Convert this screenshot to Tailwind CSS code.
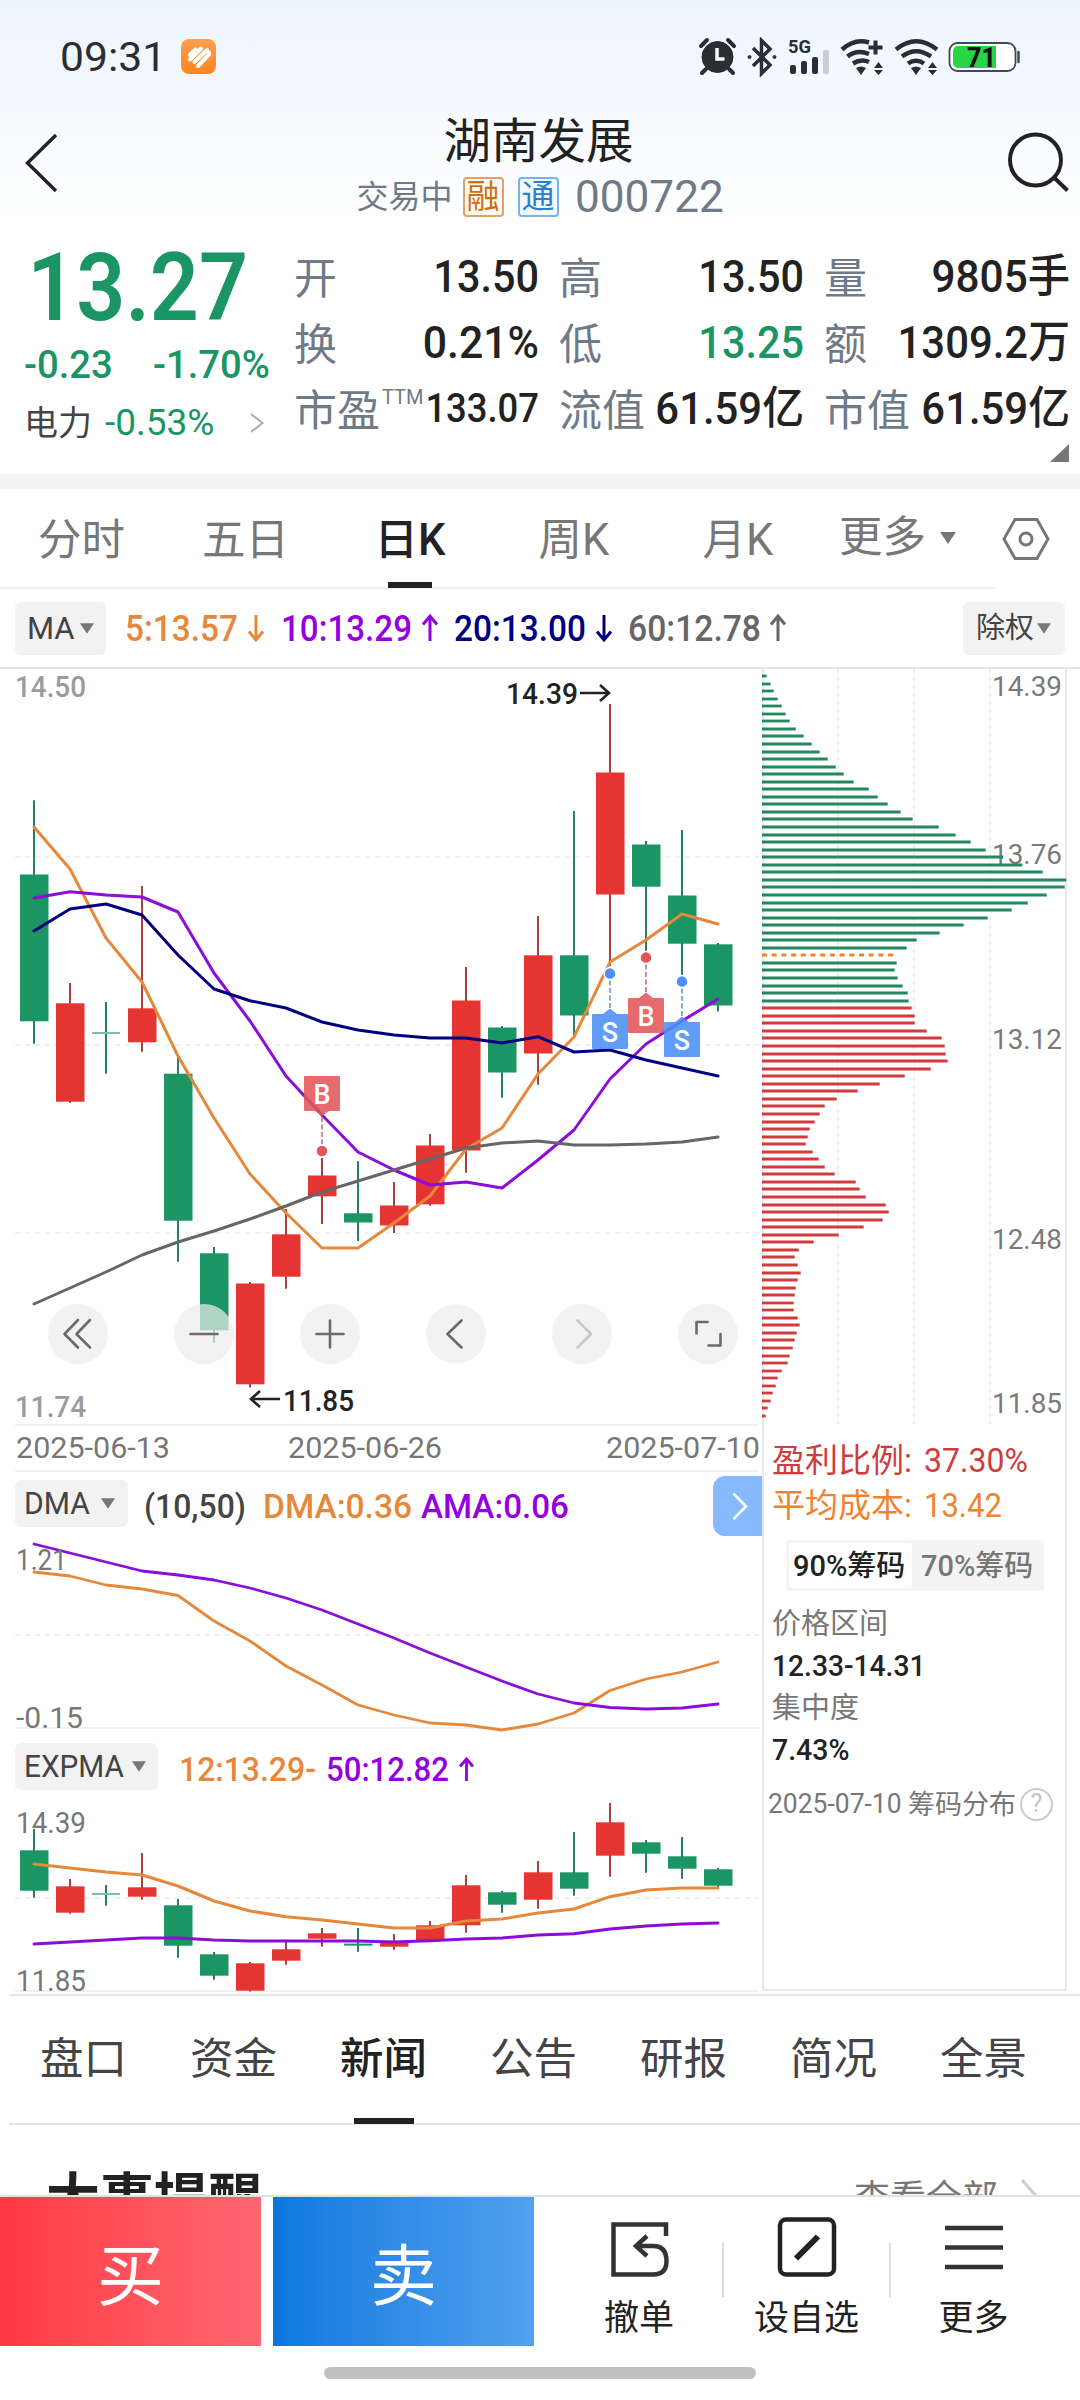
<!DOCTYPE html>
<html lang="zh-CN">
<head>
<meta charset="utf-8">
<title>湖南发展 000722</title>
<script src="https://cdn.jsdelivr.net/npm/@tailwindcss/browser@4"></script>
</head>
<body class="bg-white">
<div class="relative flex h-[2400px] w-[1080px] flex-col overflow-hidden bg-white font-['Roboto','Noto_Sans_CJK_SC',sans-serif] text-[#222] whitespace-nowrap">

  <!-- status bar + title -->
  <header class="h-[240px] shrink-0 bg-linear-to-b from-[#edf5fe] via-[#f7faff] to-white">
    <div class="flex h-[114px] items-center pl-[60px]">
      <span class="w-[121px] origin-left scale-x-[1.04] text-[41px] leading-[48px] text-[#2b2d30]">09:31</span>
      <svg class="h-9 w-9" viewBox="0 0 36 36"><defs><linearGradient id="og" x1="0" y1="0" x2="0" y2="1"><stop offset="0" stop-color="#ffa04c"/><stop offset="1" stop-color="#ff8420"/></linearGradient></defs><rect width="35" height="35" rx="8" fill="url(#og)"/><g fill="none" stroke="#fff" stroke-width="4" stroke-linecap="round" stroke-linejoin="round"><path d="M9 16L14.500 10.500M9 20.500L20 9.500M13.500 23L26 11M17 27L28 15.500V13.500"/></g></svg>
      <svg class="ml-[481px] h-[40px] w-[324px]" viewBox="698 37 324 40">
        <g fill="#2b2d30" stroke="#2b2d30">
          <circle cx="717.500" cy="57" r="15.500"/><path fill="none" stroke-width="4" stroke-linecap="round" d="M701 46l6-6M734 46l-6-6M706 69l-4 4M729 69l4 4"/>
          <path d="M717 48v11h7.500" fill="none" stroke="#f4f8ff" stroke-width="3.500"/>
          <path fill="none" stroke-width="3.500" d="M753 48l17 17-8.500 8.500V40.500l8.500 8.500-17 17"/><circle cx="749.500" cy="57" r="1.500"/><circle cx="774.500" cy="57" r="1.500"/>
        </g>
        <text x="788" y="53" font-size="18.500" font-weight="700" textLength="23" lengthAdjust="spacingAndGlyphs" fill="#2b2d30">5G</text>
        <g fill="#2b2d30"><rect x="790" y="65" width="6" height="9" rx="2"/><rect x="801" y="61" width="6" height="13" rx="2"/><rect x="812" y="57" width="6" height="17" rx="2"/><rect x="823" y="50" width="6" height="24" rx="2" fill="#c9ccd0"/></g>
        <g fill="none" stroke="#2b2d30" stroke-width="4.500">
          <path d="M842 49.500Q855 38 869 42.500M847.500 56.500Q857 49 869 54M853 63.500Q861 58.500 869 62"/>
          <path d="M868.500 47.500h14M875.500 40.500v14" stroke-width="4"/>
          <path d="M896 49.500Q916 33 937 49.500M902 56.500Q916 46 931 56.500M908 63.500Q916 58 924 63.500"/>
        </g>
        <g fill="#2b2d30"><path d="M856 68q5-3 10 0l-5 7zM911 68q5-3 10 0l-5 7zM874 68l4.500-6 4.500 6zM874 70l4.500 5 4.500-5zM928 68l4.500-6 4.500 6zM928 70l4.500 5 4.500-5z"/></g>
        <rect x="949.500" y="43" width="66" height="28" rx="8" fill="#fff" stroke="#45484c" stroke-width="1.800"/><path d="M1018.500 52v10" stroke="#45484c" stroke-width="2.500" stroke-linecap="round"/>
        <path d="M958 46h38v22h-38a5 5 0 0 1-5-5V51a5 5 0 0 1 5-5z" fill="#28d645"/>
        <text x="967" y="66.500" font-size="27" font-weight="800" textLength="29" lengthAdjust="spacingAndGlyphs" fill="#111">71</text>
      </svg>
    </div>
    <div class="flex h-[120px]">
      <svg class="ml-[20px] mt-[16px] h-[66px] w-[60px]" viewBox="20 130 60 66"><path d="M56 135L27.500 163L56 191" fill="none" stroke="#222" stroke-width="3.400"/></svg>
      <div class="flex flex-1 flex-col items-center">
        <h1 class="-ml-[3px] text-[47.5px] leading-[56px]">湖南发展</h1>
        <div class="-ml-[2px] mt-[2px] flex h-[50px] items-center text-[32px] leading-[50px] text-[#6f7a87]">
          <span class="w-[106px]">交易中</span>
          <span class="mr-[14px] flex h-[40px] w-[41px] items-center justify-center rounded-[4px] border-2 border-[#e0a068] bg-[#fffaf2] text-[33px] leading-[36px] text-[#cc6f16]">融</span>
          <span class="flex h-[40px] w-[41px] items-center justify-center rounded-[4px] border-2 border-[#7cb1e6] bg-[#f0f9ff] text-[33px] leading-[36px] text-[#2d7fcc]">通</span>
          <span class="ml-[16px] w-[147px] origin-left scale-x-[.98] text-[45px]">000722</span>
        </div>
      </div>
      <svg class="mt-[14px] mr-[8px] h-[70px] w-[72px]" viewBox="1000 128 72 70"><circle cx="1035.500" cy="160" r="25.500" fill="none" stroke="#222" stroke-width="4"/><path d="M1054 177.500L1067.500 190.500" stroke="#222" stroke-width="4"/></svg>
    </div>
  </header>

  <!-- quote summary -->
  <section class="flex h-[234px] shrink-0">
    <div class="w-[295px] text-[#1a9563]">
      <div class="mt-[2px] h-[92px] origin-left scale-x-[.905] pl-[30px] text-[95px] leading-[92px] font-semibold">13.27</div>
      <div class="mt-[9px] flex h-[44px] text-[39px] leading-[44px] font-medium">
        <span class="ml-[24px] w-[129px] origin-left scale-x-[.98]">-0.23</span><span class="origin-left scale-x-[.98]">-1.70%</span>
      </div>
      <div class="mt-[14px] flex h-[44px] items-center text-[37px] leading-[44px]">
        <span class="ml-[24px] w-[81px] text-[34px] text-[#444]">电力</span><span class="w-[142px]">-0.53%</span>
        <svg class="h-6 w-5" viewBox="0 0 20 24"><path d="M4 3L15.500 12L4 21" fill="none" stroke="#a8adb3" stroke-width="2"/></svg>
      </div>
    </div>
    <div class="relative -ml-[1px] grid h-[202px] w-[776px] grid-cols-[245px_245px_246px] grid-rows-3 gap-x-[20px] pt-[4px] text-[45px] leading-[66px] font-medium">
      <div class="flex"><span class="pt-[2px] text-[43px] font-normal text-[#6f7a87]">开</span><b class="flex w-0 flex-1 origin-right scale-x-[.92] justify-end font-medium">13.50</b></div>
      <div class="flex"><span class="pt-[2px] text-[43px] font-normal text-[#6f7a87]">高</span><b class="flex w-0 flex-1 origin-right scale-x-[.92] justify-end font-medium">13.50</b></div>
      <div class="flex"><span class="pt-[2px] text-[43px] font-normal text-[#6f7a87]">量</span><b class="flex w-0 flex-1 origin-right scale-x-[.94] justify-end font-medium">9805手</b></div>
      <div class="flex"><span class="pt-[2px] text-[43px] font-normal text-[#6f7a87]">换</span><b class="flex w-0 flex-1 origin-right scale-x-[.95] justify-end font-medium">0.21%</b></div>
      <div class="flex"><span class="pt-[2px] text-[43px] font-normal text-[#6f7a87]">低</span><b class="flex w-0 flex-1 origin-right scale-x-[.92] justify-end font-medium text-[#1a9563]">13.25</b></div>
      <div class="flex"><span class="pt-[2px] text-[43px] font-normal text-[#6f7a87]">额</span><b class="flex w-0 flex-1 origin-right scale-x-[.93] justify-end font-medium">1309.2万</b></div>
      <div class="flex"><span class="pt-[2px] text-[43px] font-normal text-[#6f7a87]">市盈</span><span class="w-0 origin-left pt-[2px] pl-[2px] text-[20px] leading-[38px] font-normal text-[#6f7a87]">TTM</span><b class="flex w-0 flex-1 origin-right scale-x-[.91] justify-end text-[40px] font-medium">133.07</b></div>
      <div class="flex"><span class="pt-[2px] text-[43px] font-normal text-[#6f7a87]">流值</span><b class="flex w-0 flex-1 origin-right scale-x-[.93] justify-end font-medium">61.59亿</b></div>
      <div class="flex"><span class="pt-[2px] text-[43px] font-normal text-[#6f7a87]">市值</span><b class="flex w-0 flex-1 origin-right scale-x-[.93] justify-end font-medium">61.59亿</b></div>
      <svg class="absolute top-[204px] right-[1px] h-[18px] w-[19px]" viewBox="0 0 19 18"><path d="M19 0V18H0z" fill="#777"/></svg>
    </div>
  </section>
  <div class="h-[15px] shrink-0 bg-[#f4f4f4]"></div>

  <!-- period tabs -->
  <nav class="flex h-[100px] shrink-0 text-[43.5px] leading-[104px] text-[#777]">
    <div class="flex h-[100px] w-[996px] border-b-2 border-[#f0f0f0]">
      <span class="w-[164px] pl-[38px]">分时</span>
      <span class="w-[164px] pl-[38px]">五日</span>
      <span class="relative w-[164px] text-center font-medium text-[#222]">日K<i class="absolute bottom-[-1px] left-[60px] h-[6px] w-[44px] bg-[#222]"></i></span>
      <span class="w-[164px] text-center">周K</span>
      <span class="w-[164px] text-center">月K</span>
      <span class="flex items-center pl-[19px]">更多<svg class="ml-[14px] h-3 w-4" viewBox="0 0 16 12"><path d="M0 0H16L8 12z" fill="#777"/></svg></span>
    </div>
    <svg class="mt-[25px] h-[50px] w-[60px]" viewBox="996 514 60 50"><g fill="none" stroke="#777" stroke-width="3"><path d="M1015 519.500H1037L1048 539L1037 558.500H1015L1004 539z"/><circle cx="1026" cy="539" r="6"/></g></svg>
  </nav>

  <!-- moving-average legend -->
  <div class="flex h-[80px] shrink-0 items-center border-b-2 border-[#e6e6e6] pl-[15px] text-[36px] leading-[53px] font-medium">
    <span class="flex h-[53px] w-[91px] items-center rounded-[6px] bg-[#f2f2f2] pl-[12px] text-[32px] leading-[55px] font-normal text-[#444]"><span class="w-[53px] origin-left scale-x-[.97]">MA</span><svg class="h-[11px] w-[14px]" viewBox="0 0 16 12"><path d="M0 0H16L8 12z" fill="#777"/></svg></span>
    <svg class="h-[53px] w-[700px]" viewBox="106 602 700 53" font-size="36" font-weight="500">
      <g fill="#e6883c" stroke="none"><text x="125" y="640.500" textLength="113" lengthAdjust="spacingAndGlyphs">5:13.57</text></g>
      <g fill="#9400e0"><text x="281" y="640.500" textLength="131" lengthAdjust="spacingAndGlyphs">10:13.29</text></g>
      <g fill="#000080"><text x="454" y="640.500" textLength="132" lengthAdjust="spacingAndGlyphs">20:13.00</text></g>
      <g fill="#666"><text x="628" y="640.500" textLength="133" lengthAdjust="spacingAndGlyphs">60:12.78</text></g>
      <g fill="none" stroke-width="3">
        <path stroke="#e6883c" d="M256 615V640M249 631.500L256 640L263 631.500"/>
        <path stroke="#9400e0" d="M430 641V616M423 624.500L430 616L437 624.500"/>
        <path stroke="#000080" d="M604 615V640M597 631.500L604 640L611 631.500"/>
        <path stroke="#666" d="M778 641V616M771 624.500L778 616L785 624.500"/>
      </g>
    </svg>
    <span class="ml-auto mr-[15px] flex h-[53px] w-[102px] items-center rounded-[6px] bg-[#f2f2f2] pl-[13px] text-[29px] leading-[57px] font-normal text-[#444]">除权<svg class="ml-[3px] h-[11px] w-[14px]" viewBox="0 0 16 12"><path d="M0 0H16L8 12z" fill="#777"/></svg></span>
  </div>

  <!-- charts -->
  <section class="flex h-[1325px] shrink-0">
    <div class="w-[762px]">
      <svg id="main" class="block h-[803px] w-[762px]" viewBox="0 669 762 803"></svg>
      <div class="flex h-[66px]">
        <div class="flex flex-1 pt-[8px] pl-[15px]">
          <span class="flex h-[47px] w-[113px] items-center rounded-[6px] bg-[#f2f2f2] pl-[9px] text-[31px] leading-[49px] font-normal text-[#444]"><span class="w-[77px] origin-left scale-x-[.97]">DMA</span><svg class="h-[11px] w-[14px]" viewBox="0 0 16 12"><path d="M0 0H16L8 12z" fill="#777"/></svg></span>
          <svg class="h-[56px] w-[480px]" viewBox="128 1480 480 56" font-size="33" font-weight="500">
            <text x="144" y="1518" textLength="102" lengthAdjust="spacingAndGlyphs" fill="#444">(10,50)</text>
            <text x="263" y="1518" textLength="149" lengthAdjust="spacingAndGlyphs" fill="#e6883c">DMA:0.36</text>
            <text x="421" y="1518" textLength="148" lengthAdjust="spacingAndGlyphs" fill="#9400e0">AMA:0.06</text>
          </svg>
        </div>
        <div class="mt-[4px] h-[60px] w-[49px] rounded-l-[12px] bg-[#87b9ff]"><svg class="h-[60px] w-[49px]" viewBox="0 0 49 60"><path d="M20.500 17.500L33 30.500L20.500 43" fill="none" stroke="#fff" stroke-width="2.600"/></svg></div>
      </div>
      <svg id="dma" class="block h-[205px] w-[762px]" viewBox="0 1538 762 205"></svg>
      <div class="flex h-[56px] pl-[15px]">
        <span class="flex h-[47px] w-[143px] items-center rounded-[6px] bg-[#f2f2f2] pl-[9px] text-[31px] leading-[49px] font-normal text-[#444]"><span class="w-[108px] origin-left scale-x-[.96]">EXPMA</span><svg class="h-[11px] w-[14px]" viewBox="0 0 16 12"><path d="M0 0H16L8 12z" fill="#777"/></svg></span>
        <svg class="h-[56px] w-[340px]" viewBox="158 1743 340 56" font-size="33" font-weight="500">
          <text x="179" y="1781" textLength="137" lengthAdjust="spacingAndGlyphs" fill="#e6883c">12:13.29-</text>
          <text x="326" y="1781" textLength="123" lengthAdjust="spacingAndGlyphs" fill="#9400e0">50:12.82</text>
          <path d="M466.500 1781V1759M460 1766.500L466.500 1759L473 1766.500" fill="none" stroke="#9400e0" stroke-width="2.800"/>
        </svg>
      </div>
      <svg id="expma" class="block h-[195px] w-[762px]" viewBox="0 1799 762 195"></svg>
    </div>
    <aside class="h-[1322px] w-[305px] border-r-2 border-b-2 border-l-2 border-[#e8e8e8]">
      <svg id="chips" class="-ml-[2px] block h-[756px] w-[305px]" viewBox="762 669 305 756"></svg>
      <div class="pt-[13px] pl-[8px] text-[33px] leading-[45px]">
        <div class="flex text-[#cf3c3c]"><span class="w-[152px]">盈利比例:</span><span class="origin-left scale-x-[.97]">37.30%</span></div>
        <div class="flex text-[#ee8430]"><span class="w-[152px]">平均成本:</span><span class="origin-left scale-x-[.94]">13.42</span></div>
      </div>
      <div class="mt-[12px] ml-[22px] flex h-[51px] w-[258px] rounded-[4px] bg-[#f4f4f4] p-[3px] text-[29px] leading-[47px] font-medium">
        <span class="w-[123px] rounded-[3px] bg-white pl-[4px]"><span class="inline-block origin-left">90%筹码</span></span><span class="pl-[9px] text-[#777]"><span class="inline-block origin-left">70%筹码</span></span>
      </div>
      <div class="mt-[12px] pl-[8px] text-[29px] leading-[42px] text-[#777]">
        <div>价格区间</div>
        <div class="origin-left scale-x-[.94] text-[30px] font-medium text-[#222]">12.33-14.31</div>
        <div>集中度</div>
        <div class="origin-left scale-x-[.95] text-[30px] font-medium text-[#222]">7.43%</div>
      </div>
      <div class="mt-[12px] flex h-[42px] items-center pl-[4px] text-[27px] leading-[42px] text-[#777]">
        <span class="w-[140px] origin-left scale-x-[.98]">2025-07-10</span><span class="w-[112px] pt-[2px] text-[27px]">筹码分布</span>
        <span class="flex h-[33px] w-[33px] shrink-0 items-center justify-center rounded-full border-2 border-[#ccc] text-[25px] text-[#c4c4c4]">?</span>
      </div>
    </aside>
  </section>

  <!-- info tabs -->
  <nav class="ml-[9px] grid h-[131px] shrink-0 grid-cols-[repeat(7,150px)] border-t-2 border-b-2 border-[#e6e6e6] text-[43.5px] leading-[128px] text-[#444]">
    <span class="pl-[31px]">盘口</span><span class="pl-[31px]">资金</span>
    <span class="relative pl-[31px] font-medium text-[#222]">新闻<i class="absolute bottom-0 left-[45px] h-[6px] w-[60px] bg-[#222]"></i></span>
    <span class="pl-[31px]">公告</span><span class="pl-[31px]">研报</span><span class="pl-[31px]">简况</span><span class="pl-[31px]">全景</span>
  </nav>
  <div class="flex h-[70px] shrink-0 overflow-hidden">
    <h2 class="mt-[41px] ml-[46px] text-[54px] leading-[68px] font-bold">大事提醒</h2>
    <span class="mt-[50px] ml-auto text-[36px] leading-[48px] text-[#777]">查看全部</span>
    <svg class="mt-[51px] mr-[38px] ml-[20px] h-[40px] w-[24px]" viewBox="0 0 24 40"><path d="M4 4L20 22L4 40" fill="none" stroke="#ccc" stroke-width="3"/></svg>
  </div>

  <!-- trade bar -->
  <footer class="relative flex h-[151px] shrink-0 border-t-2 border-[#e2e2e2] text-[35px] leading-[42px]">
    <div class="h-[149px] w-[261px] bg-linear-to-r from-[#ff3743] to-[#ff6670] text-center text-[67px] leading-[160px] text-white">买</div>
    <div class="ml-[12px] h-[149px] w-[261px] bg-linear-to-r from-[#0878de] to-[#50a1ee] text-center text-[67px] leading-[160px] text-white">卖</div>
    <div class="ml-[22px] flex w-[166px] flex-col items-center">
      <svg class="mt-[18px] h-[66px] w-[70px]" viewBox="606 2215 70 66"><g fill="none" stroke="#333" stroke-width="4.500"><path d="M668 2236V2224.500H615.500V2274.500H655Q668.500 2274.500 668.500 2261Q668.500 2246 655 2246H638"/><path d="M649 2236L638 2246L649 2256"/></g></svg>
      <span class="mt-[17px]">撤单</span>
    </div>
    <div class="mt-[46px] h-[54px] w-[2px] bg-[#ddd]"></div>
    <div class="flex w-[165px] flex-col items-center">
      <svg class="mt-[18px] h-[66px] w-[70px]" viewBox="772 2215 70 66"><rect x="780" y="2219.500" width="54" height="55" rx="6" fill="none" stroke="#222" stroke-width="4.500"/><path d="M796 2258.500L818 2236.500" stroke="#222" stroke-width="6"/></svg>
      <span class="mt-[17px]">设自选</span>
    </div>
    <div class="mt-[46px] h-[54px] w-[2px] bg-[#ddd]"></div>
    <div class="flex w-[165px] flex-col items-center">
      <svg class="mt-[18px] h-[66px] w-[70px]" viewBox="939 2215 70 66"><path d="M945 2228H1003M945 2247.500H1003M945 2267H1003" stroke="#333" stroke-width="4.500" /></svg>
      <span class="mt-[17px]">更多</span>
    </div>
  </footer>
  <div class="mx-auto mt-[21px] h-[12px] w-[432px] shrink-0 rounded-full bg-[#c0c0c0]"></div>
</div>

<script>
const G = '#1a9563', R = '#e53532', X = i => 34 + 36 * i;
const line = (ys, c, w = 3) => `<polyline points="${ys.map((y, i) => X(i) + ',' + y).join(' ')}" fill="none" stroke="${c}" stroke-width="${w}" stroke-linejoin="round" stroke-linecap="round"/>`;
const text = (s, x, base, w, size, c, wt = 400) => `<text x="${x}" y="${base}" font-size="${size}" font-weight="${wt}" fill="${c}" textLength="${w}" lengthAdjust="spacingAndGlyphs">${s}</text>`;
const rule = y => `<path d="M15 ${y}H759" stroke="#eef1f1" stroke-width="2"/>`;
const dash = y => `<path d="M15 ${y}H759" stroke="#eff0f0" stroke-width="1.800" stroke-dasharray="5 5"/>`;
const candles = rows => rows.map(([k, h, t, b, l], i) => {
  const c = k === 'g' ? G : R, s = k === 'g' ? '#2a7f62' : '#a8423e', x = X(i);
  const body = b - t < 1 ? `<path d="M${x - 14} ${t}h28" stroke="#7dbfa2" stroke-width="2"/>` : `<rect x="${x - 14}" y="${t}" width="28.500" height="${b - t}" fill="${c}"/>`;
  return `<path d="M${x} ${h}V${l}" stroke="${s}" stroke-width="2"/>` + body;
}).join('');

const price = [['g',800.3,874.5,1021.3,1043.7],['r',983,1003.3,1101.7,1102.7],['g',1002,1033,1033,1073.7],['r',886,1008.3,1042.3,1051.7],['g',1057,1073.7,1220.7,1261.7],['g',1247,1253.3,1330.3,1343],['r',1282,1283.5,1384.3,1387.5],['r',1209,1234.3,1276.7,1288.7],['r',1158,1175.5,1196.3,1224],['g',1161.3,1213.3,1222.5,1241],['r',1182,1205.5,1225.5,1233],['r',1134,1145.5,1204.3,1205.7],['r',967,1000.5,1150.5,1172.7],['g',1026,1027.5,1072.5,1097.7],['r',916,955.3,1053.5,1084.7],['g',811,955.3,1015.5,1036],['r',704,772.5,894.5,966],['g',841,844.5,886.7,951],['g',830,895.5,943.7,975],['g',943,944.3,1005.5,1011.5]];
const ma5 = [827,869,938,982,1056,1118,1174,1213,1248,1248,1223,1196,1149,1128,1074,1037,962,940,914,924];
const ma10 = [898,891.7,895,897,912,973,1021,1076,1115,1152,1170,1185,1182,1188,1160,1130,1079,1044,1021,999];
const ma20 = [931,909,904,915,955,989,1000.7,1008,1022,1030,1035,1038,1038,1043,1036.7,1052,1050,1060,1068,1076];
const ma60 = [1304,1288,1272,1255,1242,1231,1219,1206,1192,1181,1170,1159,1148,1143,1141,1145,1145,1144,1142,1137];

// trade marker: letter box with a dotted leader to the fill price
const mark = (ch, x, top, dotY, c, lc) => {
  const up = dotY < top;
  const tip = up ? `M${x - 7} ${top}L${x} ${top - 5.500}L${x + 7} ${top}z` : `M${x - 7} ${top + 35}L${x} ${top + 40}L${x + 7} ${top + 35}z`;
  return `<path d="M${x} ${up ? dotY + 7 : top + 41}V${up ? top - 6 : dotY - 6}" stroke="${lc}" stroke-width="1.800" stroke-dasharray="5 2.500"/>
  <g fill="${c}" fill-opacity=".88"><rect x="${x - 18}" y="${top}" width="36" height="35" rx="1"/><path d="${tip}"/></g>
  <circle cx="${x}" cy="${dotY}" r="6" fill="${c}" stroke="#fff" stroke-width="1.500"/>
  <text x="${x}" y="${top + 27.500}" font-size="27" font-weight="500" fill="#fff" text-anchor="middle">${ch}</text>`;
};
const btn = (x, d, c = '#6b6b6b') => `<circle cx="${x}" cy="1334" r="30" fill="#ededed" fill-opacity=".71"/><g transform="translate(${x} 1334)"><path d="${d}" fill="none" stroke="${c}" stroke-width="2.600" stroke-linecap="round" stroke-linejoin="round"/></g>`;
const BUY = ['#e2555a', '#c98084'], SELL = ['#4a90f7', '#7ba6c9'];

document.getElementById('main').innerHTML =
  dash(857) + dash(1045) + dash(1233) + rule(1425) + rule(1471) +
  text('14.50', 15, 697, 71, 30, '#9b9b9b', 500) + text('11.74', 15, 1417, 71, 30, '#9b9b9b', 500) +
  candles(price) + line(ma5, '#e6883c') + line(ma10, '#8c0cd8') + line(ma20, '#000080') + line(ma60, '#666') +
  mark('B', 322, 1076, 1151, ...BUY) + mark('S', 610, 1014, 973.6, ...SELL) + mark('B', 646, 998, 957.6, ...BUY) + mark('S', 682, 1022, 981.6, ...SELL) +
  text('14.39', 506, 704, 72, 30, '#222', 500) + '<path d="M580 693H609M600 685L609 693L600 701" fill="none" stroke="#222" stroke-width="2.600"/>' +
  text('11.85', 283, 1411, 71, 30, '#222', 500) + '<path d="M280 1399H251M260 1391L251 1399L260 1407" fill="none" stroke="#222" stroke-width="2.600"/>' +
  btn(78, 'M0 -14L-13.500 0L0 13.500M12 -14L-1.500 0L12 13.500') + btn(204, 'M-13.500 0H13.500') + btn(330, 'M-13.500 0H13.500M0 -13.500V13.500') +
  btn(456, 'M5.500 -13.500L-8.500 0L5.500 13.500') + btn(582, 'M-4.500 -13.500L9 0L-4.500 13.500', '#c8c8c8') + btn(708, 'M-0.500 -12H-11.500V-0.500M0.500 11.500H12.500V0') +
  text('2025-06-13', 16, 1458, 154, 30, '#777') + text('2025-06-26', 288, 1458, 154, 30, '#777') + text('2025-07-10', 606, 1458, 154, 30, '#777');

document.getElementById('dma').innerHTML =
  dash(1635) + rule(1728) +
  line([1572,1576,1585,1589,1595.5,1621,1641,1666,1685,1705,1715,1723,1725,1730,1724,1713,1690.5,1679,1672,1662], '#e6883c', 2.8) +
  line([1544,1553,1562,1571,1575,1580,1588,1598,1610,1624,1638,1653,1667,1681,1694,1703,1707.5,1709,1708,1704], '#8c0cd8', 2.8) +
  text('1.21', 16, 1570, 51, 30, '#777') + text('-0.15', 16, 1728, 67, 30, '#777');

document.getElementById('expma').innerHTML =
  dash(1898) + rule(1991) + text('14.39', 16, 1833, 70, 30, '#777') + text('11.85', 16, 1991, 70, 30, '#777') +
  candles([['g',1829,1850.3,1890.7,1897.7],['r',1879,1886.3,1912.7,1913.7],['g',1885,1894,1894,1905.7],['r',1853,1887.3,1896.7,1899.7],['g',1899,1905.3,1945.7,1957.7],['g',1952,1954.3,1975.7,1979.7],['r',1962,1963.3,1990.7,1991.5],['r',1939.7,1949.3,1960.7,1964.7],['r',1928,1933.3,1938.7,1946.7],['g',1928,1943.6,1945.6,1951.7],['r',1934,1941,1946.7,1949.7],['r',1921,1925.3,1940.7,1940.7],['r',1875,1885.3,1925.3,1932.7],['g',1891,1892.3,1904.7,1912.7],['r',1861,1872.3,1899.7,1908.7],['g',1832,1872.3,1888.7,1895.7],['r',1803,1822.3,1855.7,1876.7],['g',1840,1842.3,1853.7,1872.7],['g',1837,1856.3,1868.7,1878.7],['g',1868,1869.3,1885.7,1887.5]]) +
  line([1864,1868,1872,1875,1886,1901,1911,1916.7,1920,1924,1928,1928,1921,1919,1913,1909,1896.7,1890,1888,1888], '#e6883c') +
  line([1944,1942,1940,1938,1938,1940,1941,1941,1941,1941,1942,1940.7,1939,1938,1935,1933.7,1929,1926,1924,1923], '#8c0cd8');

// chip distribution: bar lengths from high to low price
const chips = [50,62,71,83,95,107,119,137,161,185,209,233,257,281,311,356,383,413,452,488,566,617,662,707,760,817,878,949,944,890,833,785,713,641,569,500,470,440,440,434,443,458,473,476,485,494,494,530,575,584,587,593,542,464,389,323,260,224,209,194,179,173,167,188,206,224,254,317,329,347,407,416,398,341,266,191,146,134,143,152,143,137,134,131,131,143,149,140,134,128,119,113,95,83,77,68,62,53,47];
const AVG = 37, CUR = 44;
document.getElementById('chips').innerHTML =
  [838, 914, 990].map(x => `<path d="M${x} 669V1424" stroke="#f0f0f0" stroke-width="2" stroke-dasharray="4 4"/>`).join('') +
  [['14.39',696],['13.76',864],['13.12',1048.5],['12.48',1249],['11.85',1413]].map(([s, y]) => text(s, 992, y, 70, 28.5, '#7a7a7a')).join('') +
  chips.map((v, i) => {
    const y = Math.round(676 + 7.551 * i), c = i === AVG ? '#ee8430' : i < CUR ? '#23885f' : '#d03c3c';
    return `<path d="M762 ${y}H${(750 + v / 3).toFixed(1)}" stroke="${c}" stroke-width="2.800"${i === AVG ? ' stroke-dasharray="5 4.700"' : ''}/>`;
  }).join('');
</script>
</body>
</html>
